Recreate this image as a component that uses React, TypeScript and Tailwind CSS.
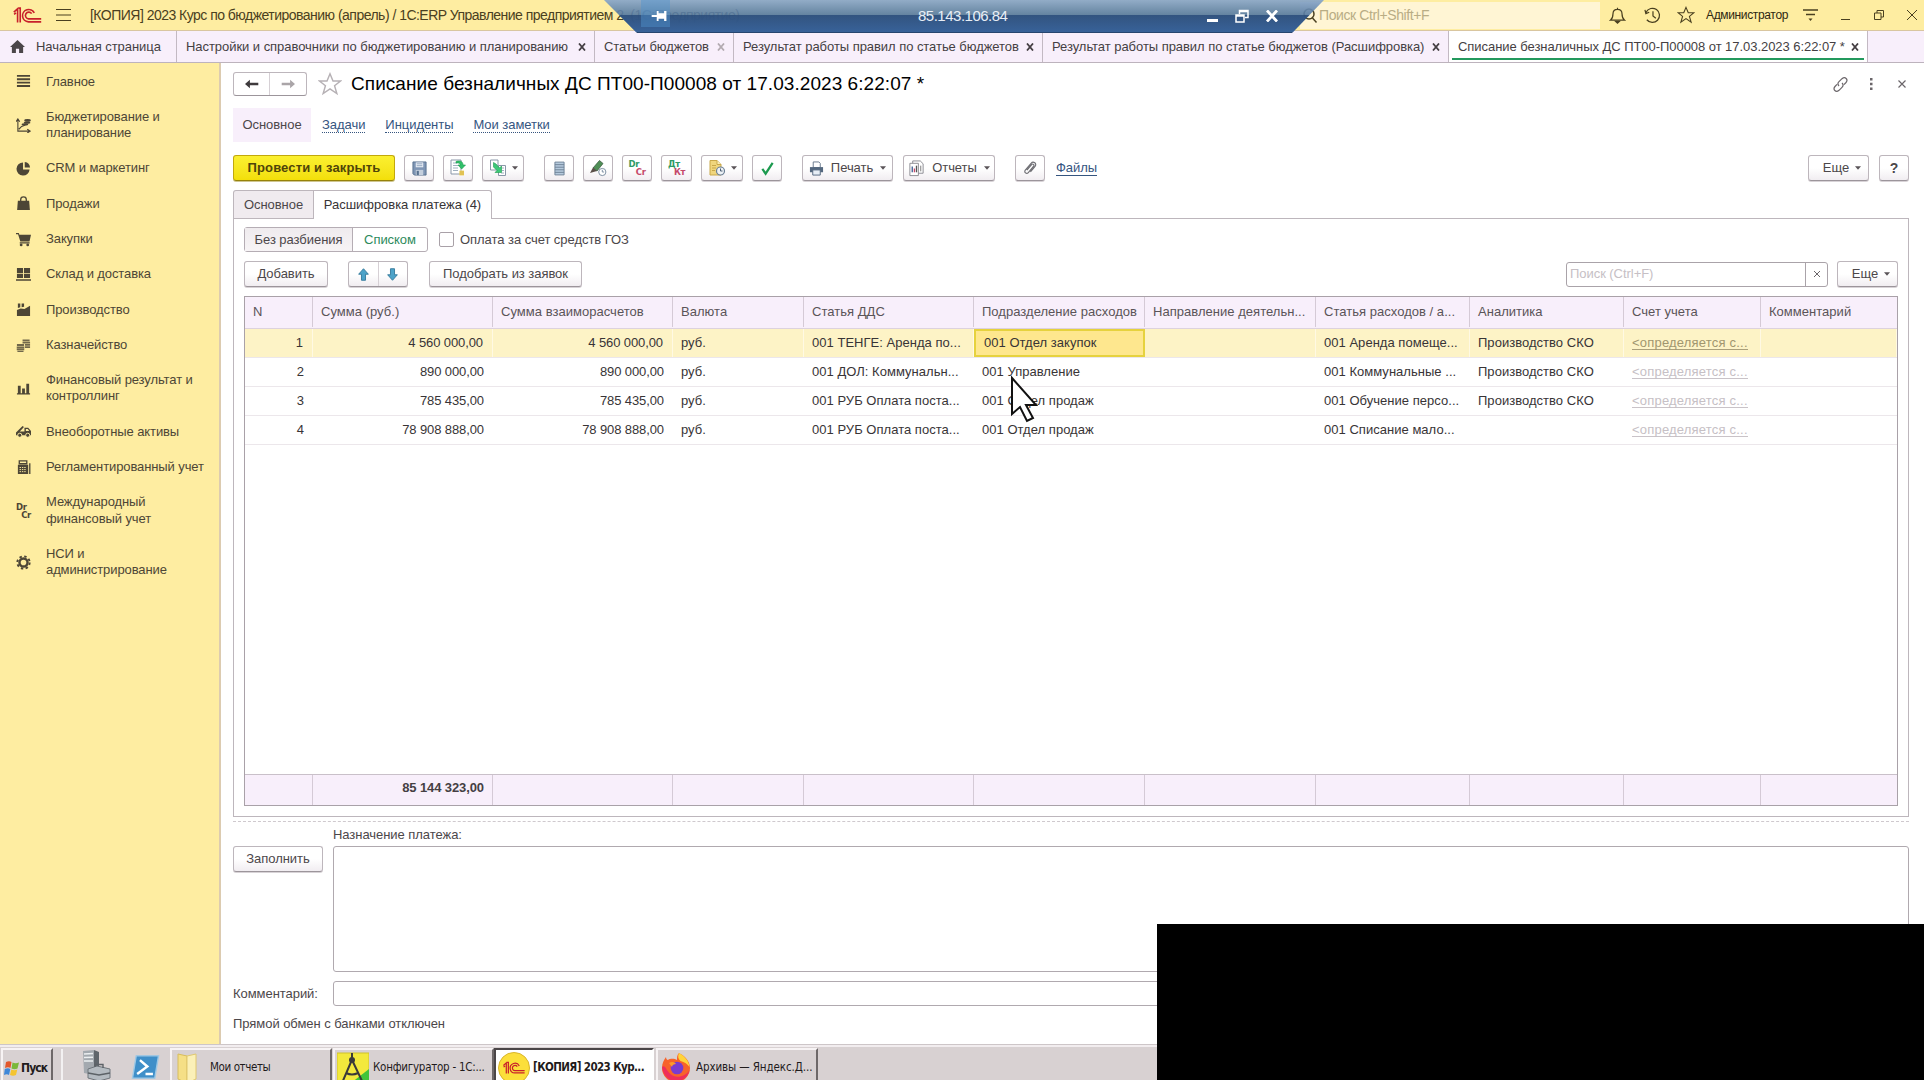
import type { ReactNode } from 'react'
import clsx from 'clsx'

const DARK = '#4d4636'

/* ---------- icons ---------- */

function Logo({ className }: { className?: string }) {
  return (
    <svg className={className} viewBox="0 0 30 18" fill="none" stroke="#c8202b" strokeWidth="1.7">
      <path d="M0.5 5.5 4.5 2v14.5M0.8 7.8l2-1.6M7.3 16.5V1.2H5.5" />
      <path d="M22.2 6.2A6.6 6.6 0 1 0 16 15.8h13.5" />
      <path d="M19.4 7A3.6 3.6 0 1 0 16 12.6h13.5" />
    </svg>
  )
}

function Caret() {
  return (
    <svg className="h-[4px] w-[6px] shrink-0" viewBox="0 0 7 4" fill="#5a5458">
      <path d="M0 0h7L3.500 4z" />
    </svg>
  )
}

function Cross({ className }: { className?: string }) {
  return (
    <svg className={clsx('size-[8px] shrink-0', className)} viewBox="0 0 8 8" fill="none" stroke="currentColor" strokeWidth="1.8">
      <path d="M1 0.500 7 7.500M7 0.500 1 7.500" />
    </svg>
  )
}

const sideIcons: Record<string, ReactNode> = {
  list: <path d="M1 1h14v2H1zM1 4.600h14v2H1zM1 8.200h14v2H1zM1 11.800h14v2H1z" />,
  plan: (
    <>
      <path d="M2 1v13h12M0 4l2-3 2 3M12 12l3 2-3 2M3 12l3-3 4-1.500" fill="none" stroke={DARK} strokeWidth="1.2" />
      <ellipse cx="12.300" cy="2.600" rx="3.500" ry="1.500" />
      <ellipse cx="11.800" cy="5" rx="3.500" ry="1.200" />
      <ellipse cx="9.500" cy="6.900" rx="3.500" ry="1.200" />
    </>
  ),
  pie: (
    <>
      <path d="M7.500 1.500a7 7 0 1 0 7 7.500h-7z" />
      <path d="M9.300 1a6.500 6.500 0 0 1 5.700 6H9.300z" />
    </>
  ),
  bag: (
    <>
      <path d="M2 5h12l.8 10H1.200z" />
      <path d="M5 8V4a3 3 0 0 1 6 0v4" fill="none" stroke={DARK} strokeWidth="1.400" />
    </>
  ),
  cart: (
    <>
      <path d="M0 1h3l.6 2H16l-1.600 7H4.600L2.200 2.500H0zM4 11h10.500v1.200H4z" />
      <circle cx="5.500" cy="13.800" r="1.500" />
      <circle cx="12.500" cy="13.800" r="1.500" />
    </>
  ),
  boxes: <path d="M1 1h6.500v5.500H1zM8.500 1H15v5.500H8.500zM1 7.300h6.500v4.500H1zM8.500 7.300H15v4.500H8.500zM0 13h16v1.600H0z" />,
  factory: <path d="M1 15V8.500l4-1.500 4 .5L15 4v11zM2 1.500h2.600V5.500L2 6.500zM6 1.500h2.600v3.500L6 5.500z" />,
  coins: (
    <>
      <path d="M7 1.500h7.500v2H7zM7 4h8v1.800H7zM9.500 6.400H15v1.800H9.500zM9.500 8.800H15v1.800H9.500z" opacity=".8" />
      <path d="M1 6.500h7.500v2H1zM.8 9h8v1.800h-8zM.8 11.300h8v1.700h-8zM1.500 13.500h6.500V15h-6.500z" opacity=".8" />
    </>
  ),
  bars: <path d="M2 5h3v8H2zM6.500 8h3v5h-3zM11 3h3v10h-3zM1 13h14v1.500H1z" />,
  truck: (
    <>
      <path d="M0 9l7-7 1.500 1.200L4 8h5V4h4l3 3.500V12H0z" />
      <path d="M10.500 5.300h2l1.600 2.200h-3.600z" fill="#feeda1" />
      <circle cx="4" cy="12" r="2.200" stroke="#feeda1" />
      <circle cx="12.500" cy="12" r="2.200" stroke="#feeda1" />
    </>
  ),
  register: (
    <>
      <path d="M3.500 1h8v3h-8z" fill="none" stroke={DARK} strokeWidth="1.400" />
      <path d="M2 5h11v10H2zM14 3.500h1.400V15H14z" />
      <path d="M3.800 8h7.500M3.800 10.200h7.500M3.800 12.400h7.500" stroke="#feeda1" strokeDasharray="1.500 1" />
    </>
  ),
  gear: (
    <>
      <circle cx="8" cy="8" r="4.300" fill="none" stroke={DARK} strokeWidth="2.600" />
      <circle cx="8" cy="8" r="6.600" fill="none" stroke={DARK} strokeWidth="2" strokeDasharray="2.590 2.590" />
    </>
  ),
}

function SideIcon({ name }: { name: string }) {
  if (name === 'drcr') {
    return (
      <span className="flex w-[15px] flex-col font-['DejaVu_Sans',sans-serif] text-[8.5px] leading-[8px] font-bold tracking-[-0.3px]">
        <span>Dr</span>
        <span className="self-end">Cr</span>
      </span>
    )
  }
  return (
    <svg className="size-[15px]" viewBox="0 0 16 16" fill={DARK}>
      {sideIcons[name]}
    </svg>
  )
}

function Bell() {
  return (
    <svg className="size-[17px]" viewBox="0 0 18 18" fill="none" stroke="#4a4020" strokeWidth="1.300">
      <path d="M1.500 14h15c-2.200-1.700-2.700-3.300-2.700-6.500C13.800 4 12 2.500 9 2.500S4.200 4 4.200 7.500c0 3.200-.5 4.800-2.700 6.500zM9 .8v1.700" />
      <path d="M7 15.200h4L9 17z" fill="#4a4020" />
    </svg>
  )
}

function History() {
  return (
    <svg className="size-[17px]" viewBox="0 0 18 18" fill="none" stroke="#4a4020" strokeWidth="1.300">
      <path d="M2.200 5.500A7.500 7.500 0 1 1 3 13.500M1 3l1 4 3.500-1.500M9.500 4.500v5l3 2.500" />
    </svg>
  )
}

function Star({ className, color }: { className?: string; color: string }) {
  return (
    <svg className={className} viewBox="0 0 20 20" fill="none" stroke={color} strokeWidth="1.200">
      <path d="M10 1.500l2.500 6h6.300l-5 4 1.900 6.500-5.700-4-5.700 4 1.900-6.500-5-4h6.300z" />
    </svg>
  )
}

function Diskette() {
  return (
    <svg className="size-[15px]" viewBox="0 0 16 16">
      <path d="M1 1h14v14H2.500L1 13.500z" fill="#7f96b5" stroke="#57708f" />
      <path d="M4 1.500h8v5.200H4z" fill="#e9eef5" />
      <path d="M5 3h6M5 5h6" stroke="#8fa3bd" />
      <path d="M4 9.500h8V15H4z" fill="#c4cfdd" />
      <path d="M5 10.500h2.300V15H5z" fill="#57708f" />
    </svg>
  )
}

function PostDoc() {
  return (
    <svg className="size-[18px]" viewBox="0 0 18 18">
      <path d="M2 1h10v14H2z" fill="#fff" stroke="#8a97a8" />
      <path d="M4 4h4M4 6.500h5M4 9h5M4 11.500h5" stroke="#9fb0c0" />
      <path d="M7 2.500c5-1.500 7 .5 7 3.500h2.500L12.700 10 9 6h2.300c0-1.700-1.300-2.300-4.300-2z" fill="#2fc06a" stroke="#1b9a4c" strokeWidth=".6" />
      <path d="M10.500 11.500H15v5h-4.500z" fill="#f2d873" />
      <path d="M10.500 13H15M10.500 15H15" stroke="#d0ac35" />
    </svg>
  )
}

function BasedOn() {
  return (
    <svg className="size-[18px]" viewBox="0 0 18 18">
      <path d="M1.500 1h7.500v10H1.500z" fill="#fff" stroke="#8a97a8" />
      <path d="M9.500 6.500h7v10h-7z" fill="#fff" stroke="#8a97a8" />
      <path d="M12.500 9h2.500M13 11.500h2M12 14h3" stroke="#9fb0c0" />
      <path d="M4.500 3.500v4.500l3.500 3.500L6 13.500h6.500V7L10.500 9 7 5z" fill="#3cc878" stroke="#1b9a4c" strokeWidth=".6" />
    </svg>
  )
}

function Ledger() {
  return (
    <svg className="h-[15px] w-[11px]" viewBox="0 0 12 16">
      <path d="M1 1h10v14H1z" fill="#b5cadd" stroke="#6c8095" />
      <path d="M1 3.800h10M1 6.600h10M1 9.400h10M1 12.200h10" stroke="#6c8095" />
    </svg>
  )
}

function PenClock() {
  return (
    <svg className="size-[18px]" viewBox="0 0 18 18">
      <path d="M4 9 10.500 1.500l3.500 3-6 7.500z" fill="#4f8f56" stroke="#3e5e42" strokeWidth=".8" />
      <path d="M1 14l3-5.500L8 12z" fill="#5a4f48" />
      <circle cx="13.300" cy="13" r="3.600" fill="#fff" stroke="#8293a5" />
      <path d="M13.300 10.800V13h1.800" stroke="#8293a5" fill="none" />
    </svg>
  )
}

function DocClock() {
  return (
    <svg className="size-[18px]" viewBox="0 0 18 18">
      <path d="M2 1.500h7l4 4V16H2z" fill="#f0d67d" stroke="#c9a84a" />
      <path d="M9 1.500v4h4" fill="#fbeeb8" stroke="#c9a84a" />
      <path d="M4 6.500h4M4 9h4M4 11.500h3" stroke="#c9a84a" />
      <circle cx="12.500" cy="12" r="4" fill="#eef2f6" stroke="#6b7f94" strokeWidth="1.200" />
      <path d="M12.500 9.500V12h2" stroke="#4b5f74" fill="none" />
    </svg>
  )
}

function Entries({ a, b }: { a: string; b: string }) {
  return (
    <span className="flex w-[17px] flex-col font-['DejaVu_Sans',sans-serif] text-[8.5px] leading-[8px] font-bold tracking-[-0.4px]">
      <span className="self-start text-[#2f9a63]">{a}</span>
      <span className="self-end text-[#c5486a]">{b}</span>
    </span>
  )
}

function Check() {
  return (
    <svg className="size-[15px]" viewBox="0 0 16 16" fill="none" stroke="#1c9a4f" strokeWidth="2.400">
      <path d="M2.500 8.500 6 13.500 13.500 2" />
    </svg>
  )
}

function Printer() {
  return (
    <svg className="size-[15px]" viewBox="0 0 16 16">
      <path d="M4.500 1h6L12 2.500V7H4.500z" fill="#fff" stroke="#66788c" />
      <path d="M1 6.500h14v5.500H1z" fill="#54687f" />
      <path d="M4 9.500h8V15H4z" fill="#e7eef6" stroke="#54687f" />
    </svg>
  )
}

function Report() {
  return (
    <svg className="size-[17px]" viewBox="0 0 18 18">
      <path d="M5 1h8l3 3v10H5z" fill="#fff" stroke="#8a8a90" />
      <path d="M2 3.500h9v13H2z" fill="#fff" stroke="#8a8a90" />
      <path d="M4.500 7v6" stroke="#3f5f94" strokeWidth="1.400" />
      <path d="M6.800 9v4" stroke="#c5486a" strokeWidth="1.400" />
      <path d="M9 6v7" stroke="#555" strokeWidth="1.400" />
      <path d="M13.500 6v6" stroke="#777" />
    </svg>
  )
}

function Clip() {
  return (
    <svg className="size-[16px]" viewBox="0 0 18 18" fill="none" stroke="#6f6f74" strokeWidth="1.300">
      <path d="M5.500 11.500l5.300-6.300c1.400-1.600 3.600.2 2.300 1.800l-6 7.100c-2 2.300-5.300-.3-3.400-2.700l6.500-7.700c2.600-3 7 .4 4.500 3.500l-5.200 6.200" />
    </svg>
  )
}

function Arrow({ color, d }: { color: string; d: string }) {
  return (
    <svg className="h-[10px] w-[14px]" viewBox="0 0 20 14" fill={color}>
      <path d={d} />
    </svg>
  )
}

/* ---------- building blocks ---------- */

function Btn({ children, className }: { children: ReactNode; className?: string }) {
  return (
    <button
      className={clsx(
        'flex h-[26px] shrink-0 items-center justify-center rounded-[3px] border border-[#bdb6bc] border-b-[#9c959b] bg-gradient-to-b from-white from-50% to-[#f1edf1] text-[#4c474a] shadow-[0_1px_0_#d8d3d7]',
        className,
      )}
    >
      {children}
    </button>
  )
}

/* ---------- data ---------- */

const sections = [
  { icon: 'list', lines: ['Главное'] },
  { icon: 'plan', lines: ['Бюджетирование и', 'планирование'] },
  { icon: 'pie', lines: ['CRM и маркетинг'] },
  { icon: 'bag', lines: ['Продажи'] },
  { icon: 'cart', lines: ['Закупки'] },
  { icon: 'boxes', lines: ['Склад и доставка'] },
  { icon: 'factory', lines: ['Производство'] },
  { icon: 'coins', lines: ['Казначейство'] },
  { icon: 'bars', lines: ['Финансовый результат и', 'контроллинг'] },
  { icon: 'truck', lines: ['Внеоборотные активы'] },
  { icon: 'register', lines: ['Регламентированный учет'] },
  { icon: 'drcr', lines: ['Международный', 'финансовый учет'] },
  { icon: 'gear', lines: ['НСИ и', 'администрирование'] },
]

const openTabs = [
  { title: 'Настройки и справочники по бюджетированию и планированию', width: 'w-[418px]' },
  { title: 'Статьи бюджетов', width: 'w-[139px]', faded: true },
  { title: 'Результат работы правил по статье бюджетов', width: 'w-[309px]' },
  { title: 'Результат работы правил по статье бюджетов (Расшифровка)', width: 'w-[406px]' },
  { title: 'Списание безналичных ДС ПТ00-П00008 от 17.03.2023 6:22:07 *', width: 'w-[419px]', active: true },
]

const columns = [
  'N',
  'Сумма (руб.)',
  'Сумма взаиморасчетов',
  'Валюта',
  'Статья ДДС',
  'Подразделение расходов',
  'Направление деятельн...',
  'Статья расходов / а...',
  'Аналитика',
  'Счет учета',
  'Комментарий',
]

const rows = [
  ['1', '4 560 000,00', '4 560 000,00', 'руб.', '001 ТЕНГЕ: Аренда по...', '001 Отдел закупок', '', '001 Аренда помеще...', 'Производство СКО', '<определяется с...', ''],
  ['2', '890 000,00', '890 000,00', 'руб.', '001 ДОЛ: Коммунальн...', '001 Управление', '', '001 Коммунальные ...', 'Производство СКО', '<определяется с...', ''],
  ['3', '785 435,00', '785 435,00', 'руб.', '001 РУБ Оплата поста...', '001 Отдел продаж', '', '001 Обучение персо...', 'Производство СКО', '<определяется с...', ''],
  ['4', '78 908 888,00', '78 908 888,00', 'руб.', '001 РУБ Оплата поста...', '001 Отдел продаж', '', '001 Списание мало...', '', '<определяется с...', ''],
]

const GRID = 'grid grid-cols-[68px_180px_180px_131px_170px_171px_171px_154px_154px_137px_1fr]'

/* ---------- page parts ---------- */

function TitleBar() {
  return (
    <header className="flex h-[31px] shrink-0 items-center border-b border-[#d9c6a0] bg-[#feeda1] text-[#4a4020]">
      <Logo className="ml-[13px] h-[17px] w-[29px]" />
      <svg className="ml-[14px] h-[14px] w-[15px]" viewBox="0 0 15 14" stroke="#4a4020" strokeWidth="1.200">
        <path d="M0 1.500h15M0 7h15M0 12.500h15" />
      </svg>
      <span className="ml-[19px] text-[14px] tracking-[-0.52px] whitespace-pre">
        [КОПИЯ] 2023 Курс по бюджетированию (апрель) / 1С:ERP Управление предприятием 2. (1С:Предприятие)
      </span>
      <div className="ml-auto flex h-[27px] w-[300px] items-center bg-[#fff5d4] pl-[3px] text-[14px] tracking-[-0.4px] text-[#b9ad85]">
        <svg className="mr-[1px] size-[15px]" viewBox="0 0 15 15" fill="none" stroke="#4a4020" strokeWidth="1.500">
          <circle cx="6" cy="6" r="5" />
          <path d="M9.500 10l4 4.500" />
        </svg>
        Поиск Ctrl+Shift+F
      </div>
      <div className="flex items-center">
        <span className="flex w-[35px] justify-center"><Bell /></span>
        <span className="flex w-[34px] justify-center"><History /></span>
        <span className="flex w-[34px] justify-center"><Star className="size-[18px]" color="#4a4020" /></span>
        <span className="w-[89px] pl-[3px] text-[12px] tracking-[-0.35px] text-[#2e2710]">Администратор</span>
        <span className="flex w-[36px] justify-center">
          <svg className="h-[14px] w-[15px]" viewBox="0 0 15 14" stroke="#4a4020" strokeWidth="1.300">
            <path d="M0 2h15M3 6.500h9" />
            <path d="M5.500 10.500h4L7.500 13z" fill="#4a4020" stroke="none" />
          </svg>
        </span>
        <span className="flex w-[34px] justify-center pt-[9px]"><span className="h-[1px] w-[9px] bg-[#4a4020]" /></span>
        <span className="flex w-[34px] justify-center">
          <svg className="size-[10px]" viewBox="0 0 10 10" fill="none" stroke="#4a4020">
            <path d="M.5 3h6.500v6.500H.5zM3 3V.5h6.500V7H7" />
          </svg>
        </span>
        <span className="flex w-[28px] justify-center pl-[4px]">
          <svg className="size-[10px]" viewBox="0 0 10 10" stroke="#4a4020"><path d="M0 0l10 10M10 0 0 10" /></svg>
        </span>
      </div>
    </header>
  )
}

function WindowTabs() {
  return (
    <nav className="flex h-[32px] shrink-0 border-b border-[#bdb3bd] bg-[#f8effb] tracking-[-0.05px] text-[#453f43]">
      <div className="flex w-[177px] items-center border-r border-[#c3b9c3] pl-[10px]">
        <svg className="mr-[11px] size-[15px]" viewBox="0 0 16 16" fill="#4b4649">
          <path d="M8 1l8 7.500h-2V15h-4.300v-4.500H6.300V15H2V8.500H0z" />
        </svg>
        Начальная страница
      </div>
      {openTabs.map((tab, i) => (
        <div
          key={i}
          className={clsx('flex items-center justify-between border-r border-[#c3b9c3] pr-[8px] pl-[9px] whitespace-nowrap', tab.width, tab.active && 'bg-white')}
        >
          {tab.active ? (
            <div className="-mr-[5px] -ml-[6px] flex h-[29px] grow items-center justify-between self-start border-b-2 border-[#23995d] pt-[4px] pr-[5px] pl-[6px]">
              {tab.title}
              <Cross />
            </div>
          ) : (
            <>
              {tab.title}
              <Cross className={tab.faded ? 'text-[#b3abb1]' : ''} />
            </>
          )}
        </div>
      ))}
    </nav>
  )
}

function Sidebar() {
  return (
    <aside className="w-[221px] shrink-0 border-r-2 border-[#dccbb0] bg-[#feeda1] pt-[1px] text-[#4d4636]">
      {sections.map(section => (
        <div key={section.icon} className="flex items-center py-[9.5px] pl-[16px] leading-[16.3px]">
          <span className="flex w-[30px] shrink-0"><SideIcon name={section.icon} /></span>
          <span>
            {section.lines.map(line => (
              <span key={line} className="block whitespace-nowrap">{line}</span>
            ))}
          </span>
        </div>
      ))}
    </aside>
  )
}

function FormHeader() {
  return (
    <>
      <div className="mt-[9px] flex h-[24px] items-center">
        <div className="flex h-[24px] w-[74px] shrink-0 rounded-[3px] border border-[#bdb6bc] border-b-[#9c959b]">
          <span className="flex w-1/2 items-center justify-center border-r border-[#d6d0d5]">
            <Arrow color="#3f3b3d" d="M0 7l7-6v4.300h12v3.400H7V13z" />
          </span>
          <span className="flex w-1/2 items-center justify-center">
            <Arrow color="#aaa5a8" d="M20 7l-7-6v4.300H1v3.400h12V13z" />
          </span>
        </div>
        <Star className="ml-[11px] size-[24px]" color="#b6b1b5" />
        <h1 className="ml-[9px] text-[19px] tracking-[0.06px] text-black">
          Списание безналичных ДС ПТ00-П00008 от 17.03.2023 6:22:07 *
        </h1>
        <div className="ml-auto flex items-center gap-[21px] text-[#6b666a]">
          <svg className="size-[17px]" viewBox="0 0 17 17" fill="none" stroke="currentColor" strokeWidth="1.200">
            <path d="M7 10c-2-2-1-3.300 0-4.300l3-3c3.200-2.700 6.500.8 4 3.800l-2 2.200M10 7c2 2 1 3.300 0 4.300l-3 3c-3.200 2.700-6.500-.8-4-3.800l2-2.200" />
          </svg>
          <svg className="h-[12px] w-[3px]" viewBox="0 0 3 12" fill="currentColor"><path d="M0 0h2.500v2.500H0zM0 4.700h2.500v2.500H0zM0 9.400h2.500V12H0z" /></svg>
          <svg className="mr-[3px] ml-[4px] size-[8px]" viewBox="0 0 8 8" stroke="currentColor" strokeWidth="1.200"><path d="M.5.500l7 7M7.500.500l-7 7" /></svg>
        </div>
      </div>

      <div className="mt-[12px] flex h-[34px] items-center text-[#35557f]">
        <span className="flex h-full w-[78px] items-center justify-center bg-[#f8effb] text-[#4c474a]">Основное</span>
        <a className="ml-[11px] border-b border-dotted border-[#35557f] leading-[14px]">Задачи</a>
        <a className="ml-[20px] border-b border-dotted border-[#35557f] leading-[14px]">Инциденты</a>
        <a className="ml-[20px] border-b border-dotted border-[#35557f] leading-[14px]">Мои заметки</a>
      </div>

      <div className="mt-[13px] flex h-[26px] items-center">
        <button className="mr-[9px] h-[26px] w-[162px] rounded-[3px] border border-[#c2a80c] border-b-[#96820a] bg-gradient-to-b from-[#fbf02f] to-[#f3df08] text-[13px] font-bold tracking-[0.15px] text-[#4f4409] shadow-[0_1px_0_#cfc690]">
          Провести и закрыть
        </button>
        <Btn className="mr-[9px] w-[30px]"><Diskette /></Btn>
        <Btn className="mr-[9px] w-[30px]"><PostDoc /></Btn>
        <Btn className="mr-[20px] w-[42px] gap-[5px]"><BasedOn /><Caret /></Btn>
        <Btn className="mr-[9px] w-[30px]"><Ledger /></Btn>
        <Btn className="mr-[9px] w-[30px]"><PenClock /></Btn>
        <Btn className="mr-[9px] w-[30px]"><Entries a="Dr" b="Cr" /></Btn>
        <Btn className="mr-[9px] w-[31px]"><Entries a="Дт" b="Кт" /></Btn>
        <Btn className="mr-[9px] w-[42px] gap-[5px]"><DocClock /><Caret /></Btn>
        <Btn className="mr-[20px] w-[30px]"><Check /></Btn>
        <Btn className="mr-[10px] w-[91px] gap-[7px]"><Printer />Печать<Caret /></Btn>
        <Btn className="mr-[20px] w-[92px] gap-[7px]"><Report />Отчеты<Caret /></Btn>
        <Btn className="mr-[11px] w-[30px]"><Clip /></Btn>
        <a className="border-b border-[#35557f] leading-[14px] text-[#35557f]">Файлы</a>
        <Btn className="mr-[10px] ml-auto w-[61px] gap-[6px] pl-[7px]">Еще<Caret /></Btn>
        <Btn className="w-[30px] text-[14px] font-bold text-[#2c292b]">?</Btn>
      </div>
    </>
  )
}

function PaymentTable() {
  return (
    <div className="flex grow flex-col border border-[#a9a1a8] tracking-[0.03px]">
      <div className={clsx(GRID, 'h-[32px] shrink-0 border-b border-[#ddd2de] bg-[#f8effb] pb-px text-[#5a5458]')}>
        {columns.map(column => (
          <div key={column} className="flex items-center overflow-hidden border-r border-[#d5cad6] pl-[8px] whitespace-nowrap last:border-r-0">
            {column}
          </div>
        ))}
      </div>
      {rows.map((row, r) => (
        <div key={row[0]} className={clsx(GRID, 'h-[29px] shrink-0 border-b border-[#ece7eb] text-[#383436]', r === 0 && 'bg-[#fdf3c6]')}>
          {row.map((cell, c) => (
            <div
              key={c}
              className={clsx(
                'flex items-center overflow-hidden pl-[8px] whitespace-nowrap',
                c < 3 && 'justify-end pr-[9px] tracking-[-0.1px]',
                c !== 5 && r === 0 && 'border-r border-[#fff9e3]',
                r === 0 && c < 3 && 'pr-[8px]',
                r === 0 && c === 5 && 'border-2 border-[#e6d23e] bg-[#fee78e] pl-[6px]',
              )}
            >
              {c === 9 ? (
                <span className={clsx('border-b leading-[13px] tracking-[0.2px]', r === 0 ? 'border-[#aba07a] text-[#a1966f]' : 'border-[#c9c3c8] text-[#c6c0c5]')}>{cell}</span>
              ) : (
                cell
              )}
            </div>
          ))}
        </div>
      ))}
      <div className={clsx(GRID, 'mt-auto h-[31px] shrink-0 border-t border-[#c9c0c9] bg-[#f8effb] text-[13px] font-bold text-[#453f43]')}>
        {columns.map((column, c) => (
          <div key={column} className="flex items-center justify-end border-r border-[#d5cad6] pr-[8px] pb-[4px] tracking-[-0.1px] last:border-r-0">
            {c === 1 && '85 144 323,00'}
          </div>
        ))}
      </div>
    </div>
  )
}

function DetailsPanel() {
  return (
    <>
      <div className="mt-[9px] flex h-[28px] shrink-0 text-[#4c474a]">
        <div className="flex w-[81px] items-center justify-center rounded-tl-[3px] border border-b-0 border-[#bdb6bc] bg-[#f0ebef]">Основное</div>
        <div className="z-10 -mb-px flex w-[178px] items-center justify-center rounded-tr-[3px] border-t border-r border-[#bdb6bc] bg-white text-[#383436]">
          Расшифровка платежа (4)
        </div>
      </div>
      <div className="flex h-[599px] shrink-0 flex-col border border-[#bdb6bc] px-[10px] pt-[8px] pb-[10px]">
        <div className="flex h-[25px] items-center text-[#4c474a]">
          <div className="flex h-[25px] w-[184px] rounded-[3px] border border-[#b5adb4]">
            <span className="flex w-[108px] items-center justify-center border-r border-[#b5adb4] bg-gradient-to-b from-[#efebee] to-[#f7f4f6]">Без разбиения</span>
            <span className="flex grow items-center justify-center text-[#2d8a5c]">Списком</span>
          </div>
          <span className="ml-[11px] size-[15px] rounded-[2px] border border-[#a9a1a8]" />
          <span className="ml-[6px]">Оплата за счет средств ГОЗ</span>
        </div>
        <div className="mt-[9px] mb-[9px] flex h-[26px] items-center">
          <Btn className="w-[84px]">Добавить</Btn>
          <Btn className="ml-[20px] w-[60px]">
            <span className="flex h-full grow items-center justify-center border-r border-[#d6d0d5]">
              <svg className="h-[13px] w-[11px]" viewBox="0 0 12 14" fill="#4da3c9" stroke="#34799b"><path d="M6 .7l5.300 6H8.200v6.600H3.800V6.700H.7z" /></svg>
            </span>
            <span className="flex h-full grow items-center justify-center">
              <svg className="h-[13px] w-[11px]" viewBox="0 0 12 14" fill="#4da3c9" stroke="#34799b"><path d="M6 13.300l5.300-6H8.200V.7H3.800v6.600H.7z" /></svg>
            </span>
          </Btn>
          <Btn className="ml-[21px] w-[153px]">Подобрать из заявок</Btn>
          <div className="ml-auto flex h-[25px] w-[262px] rounded-[3px] border border-[#aaa3a9]">
            <span className="flex grow items-center pl-[3px] text-[#c6c0c5]">Поиск (Ctrl+F)</span>
            <span className="flex w-[22px] items-center justify-center border-l border-[#aaa3a9] text-[#6b666a]">
              <svg className="size-[6px]" viewBox="0 0 6 6" stroke="currentColor"><path d="M0 0l6 6M6 0 0 6" /></svg>
            </span>
          </div>
          <Btn className="ml-[9px] w-[61px] gap-[6px] pl-[7px]">Еще<Caret /></Btn>
        </div>
        <PaymentTable />
      </div>
    </>
  )
}

function FormFooter() {
  return (
    <div className="mt-[4px] flex flex-col border-t border-dashed border-[#cfc9ce] text-[#4c474a]">
      <div className="mt-[4px] ml-[100px] h-[20px] leading-[18px]">Назначение платежа:</div>
      <div className="flex items-start justify-between">
        <Btn className="w-[90px]">Заполнить</Btn>
        <div className="h-[126px] w-[1576px] rounded-[3px] border border-[#b0a9af]" />
      </div>
      <div className="mt-[9px] flex items-center justify-between">
        <span>Комментарий:</span>
        <div className="h-[25px] w-[1576px] rounded-[3px] border border-[#b0a9af]" />
      </div>
      <div className="mt-[8px]">Прямой обмен с банками отключен</div>
    </div>
  )
}

function Task({ children, className, active }: { children: ReactNode; className?: string; active?: boolean }) {
  return (
    <div
      className={clsx(
        'flex h-[38px] shrink-0 items-center overflow-hidden border-t-2 border-r-2 border-l-2 whitespace-nowrap',
        active ? 'border-t-[#4a4547] border-r-white border-l-[#4a4547] bg-white font-bold' : 'border-t-[#f7f3f4] border-r-[#6e6869] border-l-[#f7f3f4]',
        className,
      )}
    >
      {children}
    </div>
  )
}

function Taskbar() {
  return (
    <footer className="flex h-[36px] shrink-0 items-start overflow-hidden border-t border-[#cdc6c8] bg-[#d8d1d2] pt-[3px] font-['DejaVu_Sans_Condensed','Liberation_Sans',sans-serif] text-[11.500px] tracking-[-0.4px] text-[#1f1b1c] shadow-[inset_0_2px_0_#f2edef]">
      <Task className="ml-[1px] w-[52px]">
        <svg className="mx-[1px] size-[16px] shrink-0" viewBox="0 0 16 16">
          <path d="M2 2c2-1 4-1 5.500 0L6.500 8C5 7 3 7 1 8z" fill="#e2572b" />
          <path d="M8.500 2.500c2 1 4 1 6.500 0l-1.500 6c-2 1-4 1-6 0z" fill="#7ab83a" />
          <path d="M.8 9c2-1 4-1 5.500 0L5 15c-1.500-1-3-1-5 0z" fill="#3f87d8" />
          <path d="M7.300 9.500c2 1 4 1 6 0L12 15c-2 1-4 1-6 0z" fill="#f4c430" />
        </svg>
        <span className="text-[12px] font-bold tracking-[-0.9px]">Пуск</span>
      </Task>
      <span className="mt-[1px] ml-[8px] h-[32px] w-[2px] bg-white/70" />
      <svg className="mt-[1px] ml-[18px] h-[32px] w-[30px] shrink-0" viewBox="0 0 30 32">
        <path d="M2 2l11-1v25l-10-2z" fill="#a3a9af" />
        <path d="M13 1l5 2v20l-5 3z" fill="#5f666c" />
        <path d="M3 5l9-.5M3 8.500l9-.3M3 12h9" stroke="#eceff1" strokeWidth="1.500" />
        <path d="M7 20l9-3 13 3v9l-11 3-11-3z" fill="#b4bbc1" stroke="#6f767c" />
        <path d="M14 18v-2.500h8V19M7 24l11 2 11-2" fill="none" stroke="#5c6267" strokeWidth="1.400" />
      </svg>
      <svg className="mt-[6px] mr-[10px] ml-[20px] h-[26px] w-[29px] shrink-0" viewBox="0 0 30 28">
        <path d="M5 2h24l-4 24H1z" fill="#3f8fc9" stroke="#9cc8e6" strokeWidth="1.500" />
        <path d="M9 6.500l8 7-11 8M15 21.500h8" fill="none" stroke="#fff" strokeWidth="2.600" />
      </svg>
      <Task className="w-[162px]">
        <svg className="ml-[3px] h-[30px] w-[24px] shrink-0" viewBox="0 0 24 30">
          <path d="M3 1l9 2v27l-9-4z" fill="#f5df86" stroke="#d8bd5c" />
          <path d="M12 3l9-2v25l-9 4z" fill="#fbf0b8" stroke="#e0c871" />
        </svg>
        <span className="ml-[11px]">Мои отчеты</span>
      </Task>
      <Task className="ml-[1px] w-[161px]">
        <svg className="ml-[2px] h-[32px] w-[32px] shrink-0" viewBox="0 0 32 30">
          <path d="M0 0h32v30H0z" fill="#f3e93c" stroke="#cfc22a" />
          <path d="M14 30l18-14v14z" fill="#41c43a" />
          <circle cx="15" cy="7" r="3" fill="#3a3a3a" />
          <path d="M15 0v5M14 9L5 30M16 9l10 21M9 20q6 3 12 0" fill="none" stroke="#3a3a3a" strokeWidth="2" />
        </svg>
        <span className="ml-[4px] tracking-[-0.25px]">Конфигуратор - 1С:...</span>
      </Task>
      <Task active className="w-[160px]">
        <span className="ml-[2px] flex size-[32px] shrink-0 items-center justify-center rounded-full border border-[#d9b52c] bg-[#fcdf3a]">
          <Logo className="h-[14px] w-[22px]" />
        </span>
        <span className="ml-[3px] tracking-[-0.6px]">[КОПИЯ] 2023 Кур...</span>
      </Task>
      <Task className="ml-[2px] w-[162px]">
        <svg className="ml-[3px] size-[30px] shrink-0" viewBox="0 0 30 30">
          <path d="M18 0c4 2 11 7 11 15a14 14 0 0 1-28 0C1 10 3 7 5 4c0 2 1 3 2 3 3-2 7-1 9 0 0-3 0-5 2-7z" fill="#f7632a" />
          <path d="M18 0c4 2 10 7 10.500 14-2-3-5-5-9-6C17 6 16.500 3 18 0z" fill="#ffd43b" />
          <path d="M1 14c1 9 8 15 15 14 6 0 11-4 12.500-11-4 7-14 9-19 4C5 17 4 11 1 14z" fill="#ee2f5b" />
          <circle cx="16" cy="15" r="6.300" fill="#7a3bd0" />
          <path d="M8 10c3-2 6-1 7 1-2 0-4 1-4 3z" fill="#ff9a2b" />
        </svg>
        <span className="ml-[5px] tracking-[-0.1px]">Архивы — Яндекс.Д...</span>
      </Task>
    </footer>
  )
}

/* Remote desktop connection bar hanging over the title bar, slightly see-through */
function ConnectionBar() {
  return (
    <div className="absolute top-0 left-[604px] flex h-[33px] w-[720px] items-center border-b border-[#27466f] bg-gradient-to-b from-[#86a5cb]/90 to-[#52779f]/90 to-48% px-[36px] [clip-path:polygon(0_0,100%_0,688px_100%,33px_100%)]">
      <div className="absolute inset-x-0 top-[15px] bottom-0 bg-gradient-to-b from-[#264877]/80 to-[#386299]" />
      <div className="absolute top-0 left-[37px] h-[27px] w-[29px] bg-[#4f92cf]/45" />
      <svg className="relative ml-[11px] h-[12px] w-[17px]" viewBox="0 0 17 13" fill="#fff">
        <path d="M0 5.500h6v2H0zM5.500 1h2v11h-2zM7.500 3.500h6v6h-6zM13.500 1h2.500v11h-2.500z" />
      </svg>
      <span className="relative ml-[250px] text-[15px] tracking-[-0.5px] text-[#e8eef6]">85.143.106.84</span>
      <div className="relative ml-auto flex items-center gap-[17px] pr-[10px]">
        <span className="mt-[9px] h-[3px] w-[11px] bg-white" />
        <svg className="size-[14px]" viewBox="0 0 14 14" fill="none" stroke="#fff" strokeWidth="1.500">
          <path d="M1 6h8v7H1zM1 7h8M4.500 5V1.500H13v7h-3M4.500 2.500H13" />
        </svg>
        <svg className="size-[12px]" viewBox="0 0 12 12" stroke="#fff" strokeWidth="2.800"><path d="M1 0.500l10 11M11 0.500 1 11.500" /></svg>
      </div>
    </div>
  )
}

export default function App() {
  return (
    <div className="relative flex h-[1080px] w-[1924px] flex-col overflow-hidden bg-white font-['Liberation_Sans',Arial,sans-serif] text-[13px] tracking-[-0.1px]">
      <TitleBar />
      <WindowTabs />
      <div className="flex min-h-0 grow">
        <Sidebar />
        <main className="flex min-w-0 grow flex-col pr-[15px] pl-[12px] tracking-[-0.05px]">
          <FormHeader />
          <DetailsPanel />
          <FormFooter />
        </main>
      </div>
      <Taskbar />

      <ConnectionBar />
      <svg className="absolute top-[375px] left-[1010px] h-[48px] w-[28px]" viewBox="0 0 28 48" fill="#fff" stroke="#111" strokeWidth="2">
        <path d="M2 3v36l8-7 7 14 6-3-7-13h10z" />
      </svg>
      <div className="absolute right-0 bottom-0 h-[156px] w-[767px] bg-black" />
    </div>
  )
}
